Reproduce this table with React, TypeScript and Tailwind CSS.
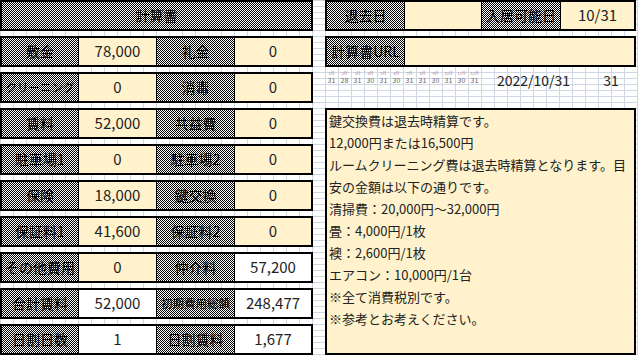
const hatch =
  "bg-[repeating-conic-gradient(#000_0%_25%,#fff_0%_50%)] bg-[length:2px_2px]";
const sheet =
  "bg-white bg-[linear-gradient(to_right,#d0d7e5_1px,transparent_1px),linear-gradient(to_bottom,#d0d7e5_1px,transparent_1px)] bg-[length:13px_6px]";
const jp = "font-['Noto_Sans_CJK_JP',sans-serif]";

type Cell = { label: string; value: string; white?: boolean; small?: boolean };

const rows: [Cell, Cell][] = [
  [{ label: "敷金", value: "78,000" }, { label: "礼金", value: "0" }],
  [{ label: "クリーニング", value: "0", small: true }, { label: "消毒", value: "0" }],
  [{ label: "賃料", value: "52,000" }, { label: "共益費", value: "0" }],
  [{ label: "駐車場1", value: "0" }, { label: "駐車場2", value: "0" }],
  [{ label: "保険", value: "18,000" }, { label: "鍵交換", value: "0" }],
  [{ label: "保証料1", value: "41,600" }, { label: "保証料2", value: "0" }],
  [{ label: "その他費用", value: "0" }, { label: "仲介料", value: "57,200", white: true }],
  [
    { label: "合計賃料", value: "52,000", white: true },
    { label: "初期費用総額", value: "248,477", white: true, small: true },
  ],
  [
    { label: "日割日数", value: "1", white: true },
    { label: "日割賃料", value: "1,677", white: true },
  ],
];

const days = [31, 28, 31, 30, 31, 30, 31, 31, 30, 31, 30, 31];

const notes = [
  "鍵交換費は退去時精算です。",
  "12,000円または16,500円",
  "ルームクリーニング費は退去時精算となります。目",
  "安の金額は以下の通りです。",
  "清掃費：20,000円～32,000円",
  "畳：4,000円/1枚",
  "襖：2,600円/1枚",
  "エアコン：10,000円/1台",
  "※全て消費税別です。",
  "※参考とお考えください。",
];

function Label({ text, small, className = "" }: { text: string; small?: boolean; className?: string }) {
  return (
    <div
      className={`${hatch} ${className} h-full flex items-center justify-center overflow-hidden whitespace-nowrap text-black ${
        small ? "text-[11.5px]" : "text-[14px]"
      }`}
    >
      {text}
    </div>
  );
}

function Value({ text, white, className = "" }: { text: string; white?: boolean; className?: string }) {
  return (
    <div
      className={`${className} h-full flex items-center justify-center text-[15px] text-[#222] ${
        white ? "bg-white" : "bg-[#fff2cc]"
      }`}
    >
      {text}
    </div>
  );
}

export default function App() {
  return (
    <div className={`${sheet} ${jp} w-[638px] h-[355px] flex gap-[12px] overflow-hidden`}>
      {/* 計算書 */}
      <div className="w-[313px] flex flex-col gap-[5px]">
        <div className={`${hatch} h-[31px] border-2 border-black flex items-center justify-center text-[14px] text-black`}>
          計算書
        </div>
        {rows.map(([a, b], i) => (
          <div key={i} className="h-[31px] flex border-2 border-black">
            <Label text={a.label} small={a.small} className="w-[76px] shrink-0" />
            <Value text={a.value} white={a.white} className="w-[78px] shrink-0 border-l border-black" />
            <Label text={b.label} small={b.small} className="w-[78px] shrink-0 border-l border-black" />
            <Value text={b.value} white={b.white} className="flex-1 border-l border-black" />
          </div>
        ))}
      </div>

      {/* right side */}
      <div className="w-[311px] flex flex-col">
        <div className="h-[31px] flex border-2 border-black">
          <Label text="退去日" className="w-[77px] shrink-0" />
          <Value text="" className="w-[77px] shrink-0 border-l border-black" />
          <Label text="入居可能日" className="w-[79px] shrink-0 border-l border-black" />
          <Value text="10/31" className="flex-1 border-l border-black" />
        </div>
        <div className="h-[31px] mt-[5px] flex border-2 border-black">
          <Label text="計算書URL" className="w-[77px] shrink-0" />
          <Value text="" className="flex-1 border-l border-black" />
        </div>

        <div className="h-[41px] flex items-start pt-[4px]">
          {days.map((d, i) => (
            <div key={i} className="w-[13px] shrink-0 flex flex-col items-center">
              <span className="text-[4px] leading-[5px] text-[#b08898] whitespace-nowrap">{i + 1}月</span>
              <span className="text-[7px] leading-[7px] mt-[1px] text-[#666]">{d}</span>
            </div>
          ))}
          <div className="w-[105px] shrink-0 text-center text-[14px] leading-[16px] text-[#222] mt-[1px]">2022/10/31</div>
          <div className="flex-1 text-center text-[14px] leading-[16px] text-[#222] mt-[1px]">31</div>
        </div>

        <div className="flex-1 border-2 border-black bg-[#fff2cc] pl-[2px] text-[13px] leading-[22px] text-[#222]">
          {notes.map((n, i) => (
            <div key={i} className="whitespace-nowrap">
              {n}
            </div>
          ))}
        </div>
      </div>
    </div>
  );
}
